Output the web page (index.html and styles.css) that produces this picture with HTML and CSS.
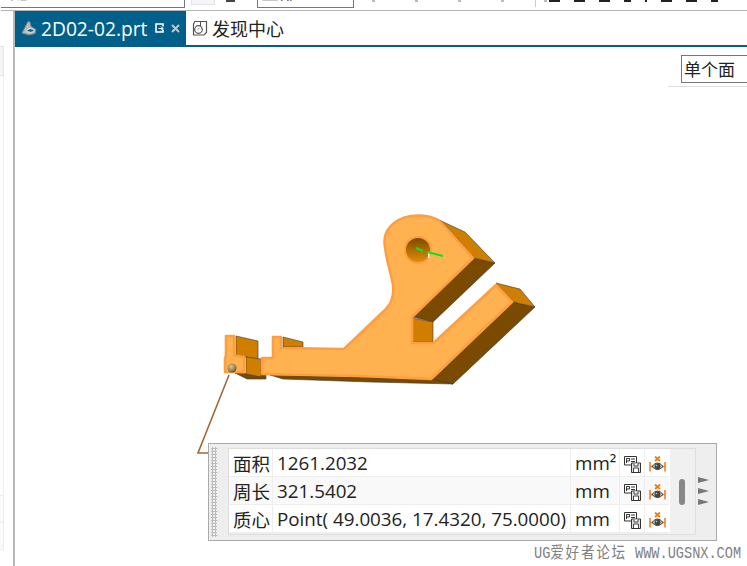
FILE: index.html
```html
<!DOCTYPE html>
<html lang="en">
<head>
  <meta charset="UTF-8" />
  <title>2D02-02.prt</title>
  <link rel="stylesheet" href="styles.css">
</head>
<body>

  <svg class="defs" width="0" height="0">
    <symbol id="ico-save" viewBox="0 0 17 17">
      <path d="M0.5 0.5h12v8.500h-12z" fill="#fff" stroke="#333"/>
      <path d="M2.500 7V2.500h3v2.500h-3M7 3h4M7 5.500h4" fill="none" stroke="#333"/>
      <path d="M7.500 7h9v9.500h-9z" fill="#e4e4e4" stroke="#333"/>
      <path d="M10 7.500v2.500h4V7.500" fill="#fff" stroke="#444"/>
      <path d="M9.500 16v-4h5v4" fill="#fff" stroke="#444"/>
    </symbol>
    <symbol id="ico-eye" viewBox="0 0 17 16">
      <path d="M6 0.500l5 4.500M11 0.500L6 5" stroke="#f07c10" stroke-width="1.800" fill="none"/>
      <path d="M1 6v9.500M16 6v9.500M1 10.500h3M13 10.500h3" stroke="#f07c10" stroke-width="1.500" fill="none"/>
      <path d="M3 10.500q5.500-7 11 0q-5.500 6-11 0z" fill="#d4d4d4" stroke="#333"/>
      <circle cx="8.500" cy="10.500" r="3" fill="#444"/>
      <circle cx="7.500" cy="9.500" r="0.800" fill="#ccc"/>
    </symbol>
  </svg>

  <div class="toolbar">
    <div class="tb-select tb-first"><span class="tb-clip">配</span></div>
    <div class="tb-btn"></div>
    <div class="tb-dash"></div>
    <div class="tb-select tb-second"><span class="tb-clip">全部</span></div>
    <div class="tb-dots"><i></i><i></i><i></i><i></i><i></i></div>
    <div class="tb-sep"></div>
    <div class="tb-icons"><i></i><i></i><i></i><i class="small"></i><i class="tiny"></i><i></i><i></i><i class="small"></i></div>
  </div>

  <div class="workspace">
    <div class="sidebar">
      <div class="side-row"></div>
      <div class="side-spacer"></div>
      <div class="side-row low"></div>
      <div class="side-row low"></div>
    </div>

    <div class="main">
      <div class="tabbar">
        <div class="tab active">
          <svg class="tab-ico" width="16" height="16" viewBox="0 0 16 16">
            <path d="M1 13L7 1.500l2 .5 1 4.500 5 3-1 4-6 1.500z" fill="#b9bcbe" stroke="#7c8084"/>
            <ellipse cx="9.500" cy="10.500" rx="3.500" ry="1.800" fill="#00618a" stroke="#eee"/>
          </svg>
          <span>2D02-02.prt</span>
          <svg class="tab-pop" width="9" height="10" viewBox="0 0 9 10">
            <path d="M8 3.500V1H1v8h7V6.500" fill="none" stroke="#fff" stroke-width="1.600"/>
            <path d="M3.500 5.500H8M6 3.500l2 2-2 2" fill="none" stroke="#fff"/>
          </svg>
          <svg class="tab-close" width="9" height="9" viewBox="0 0 9 9">
            <path d="M1 1l7 7M8 1L1 8" stroke="#b9c8d0" stroke-width="2"/>
          </svg>
        </div>
        <div class="tab plain">
          <svg class="tab-ico" width="16" height="16" viewBox="0 0 16 16">
            <path d="M3 1.500h11.500v11L12 15H1.500V4z" fill="none" stroke="#555" stroke-width="1.200"/>
            <path d="M8.500 1.500v5" stroke="#555" fill="none"/>
            <circle cx="6.500" cy="9.500" r="3.800" fill="none" stroke="#555" stroke-width="1.200"/>
            <path d="M5 11l1-2.500 2.200-1z" fill="#888"/>
          </svg>
          <span>发现中心</span>
        </div>
      </div>

      <div class="viewport">
        <svg class="model" viewBox="15 47 732 519" width="732" height="519">
          <defs>
            <linearGradient id="hole" x1="0" y1="0" x2="0" y2="1">
              <stop offset="0" stop-color="#7a4a00"/>
              <stop offset="0.5" stop-color="#b06c00"/>
              <stop offset="1" stop-color="#e08c10"/>
            </linearGradient>
            <radialGradient id="ball" cx="0.4" cy="0.35" r="0.7">
              <stop offset="0" stop-color="#d8c48e"/>
              <stop offset="0.6" stop-color="#9c8a5c"/>
              <stop offset="1" stop-color="#4e4630"/>
            </radialGradient>
          </defs>

          <!-- leader line -->
          <path d="M229 375L198 453H209" fill="none" stroke="#a0693a" stroke-width="1.600"/>

          <!-- side faces -->
          <g fill="#7a4a00" stroke="#3a3a3a" stroke-width="0.600">
            <path d="M474 258L495 263L433 322L413 317z"/>
            <path d="M513 302L535 307L453 384L432 380z"/>
            <path d="M270 375L432 379L453 384L370 382L283 379z"/>
            <path d="M235 373L266 375V379L247 379z"/>
          </g>
          <g fill="#d07e00" stroke="#3a3a3a" stroke-width="0.600">
            <path d="M437 219L465 232L495 263L474 258L447 227z"/>
            <path d="M496 283L520 289L535 307L513 302z"/>
            <path d="M412 318L433 322V342H412z"/>
            <path d="M236 336L258 341V359L246 357L236 355z"/>
            <path d="M246 357L261 359V377L246 374z"/>
            <path d="M283 337L303 342V347H283z"/>
          </g>

          <!-- lit faces -->
          <g fill="#ffb24f" stroke="#ff9e40" stroke-width="2.600" stroke-linejoin="round">
            <path d="M226 336H234V355.500L244 357V372L225 372V359L226 355z"/>
            <path d="M418 215.500C435 215.500 440 221 446 228L473 258L412 317V343H433.500L496 285L512 302L431 379L360 376L262 374V358L273 358V337H281V348L344 349L386 309C393 302 394 294 393 285C391 272 386 260 384.500 243C383.500 227 399 215.500 418 215.500z"/>
          </g>

          <!-- hole -->
          <circle cx="418" cy="250" r="14" fill="#ff9e40"/>
          <circle cx="418" cy="250" r="12" fill="url(#hole)"/>
          <path d="M428 252h1.500v6h-1.500z" fill="#fff"/>
          <path d="M416 248l7 3M427 252l16 4" stroke="#12e020" stroke-width="2" fill="none"/>

          <circle cx="232" cy="368" r="4.500" fill="url(#ball)"/>
        </svg>

        <div class="face-select">单个面</div>
        <div class="face-line"></div>

        <div class="measure">
          <div class="grip"></div>
          <div class="measure-table">
            <div class="rows">
              <div class="row">
                <div class="cell">面积</div>
                <div class="cell value">1261.2032</div>
                <div class="cell value">mm²</div>
                <div class="cell ico"><svg width="17" height="17"><use href="#ico-save"/></svg></div>
                <div class="cell ico"><svg width="17" height="16"><use href="#ico-eye"/></svg></div>
              </div>
              <div class="row alt">
                <div class="cell">周长</div>
                <div class="cell value">321.5402</div>
                <div class="cell value">mm</div>
                <div class="cell ico"><svg width="17" height="17"><use href="#ico-save"/></svg></div>
                <div class="cell ico"><svg width="17" height="16"><use href="#ico-eye"/></svg></div>
              </div>
              <div class="row">
                <div class="cell">质心</div>
                <div class="cell value">Point( 49.0036, 17.4320, 75.0000)</div>
                <div class="cell value">mm</div>
                <div class="cell ico"><svg width="17" height="17"><use href="#ico-save"/></svg></div>
                <div class="cell ico"><svg width="17" height="16"><use href="#ico-eye"/></svg></div>
              </div>
            </div>
            <div class="scroll"><div class="thumb"></div></div>
          </div>
          <div class="arrows"><i></i><i></i><i></i></div>
        </div>

        <div class="watermark">UG<span class="wm-cjk">爱好者论坛</span> WWW.UGSNX.COM</div>
      </div>
    </div>
  </div>

</body>
</html>
```

FILE: styles.css
```css
html, body {
  margin: 0;
  height: 100%;
  overflow: hidden;
  background: #fff;
}

body {
  width: 747px;
  height: 566px;
  font-family: "Open Sans", "Noto Sans CJK SC", sans-serif;
  color: #222;
}

.defs {
  display: block;
  height: 0;
}

/* top toolbar, cut off by the screenshot */
.toolbar {
  height: 10px;
  display: flex;
  align-items: flex-start;
  border-bottom: 1px solid #b4b4b4;
  overflow: hidden;
  margin-left: 1px;
}

.tb-select {
  height: 8px;
  box-sizing: border-box;
  border: 1px solid #777;
  border-top: none;
  overflow: hidden;
  position: relative;
}

.tb-first {
  width: 186px;
  margin-left: -2px;
}

.tb-first .tb-clip {
  margin-left: 10px;
}

.tb-second {
  width: 97px;
  margin-left: 22px;
}

.tb-clip {
  display: block;
  font-size: 18px;
  line-height: 18px;
  margin: -17px 0 0 3px;
}

.tb-btn {
  width: 22px;
  height: 4px;
  margin-left: 6px;
  background: #f5f5f8;
  border: 1px solid #e4e4e8;
  border-top: none;
}

.tb-dash {
  width: 9px;
  height: 2px;
  margin: 0 0 0 11px;
  background: #444;
}

.tb-dots {
  display: flex;
  gap: 40px;
  margin-left: 18px;
}

.tb-dots i {
  width: 3px;
  height: 2px;
  background: #bbb;
}

.tb-sep {
  width: 1px;
  height: 7px;
  margin-left: -12px;
  background: #ccc;
}

.tb-icons {
  display: flex;
  gap: 14px;
  margin-left: 13px;
}

.tb-icons i {
  width: 11px;
  height: 2px;
  background: #222;
}

.tb-icons i.small {
  width: 7px;
}

.tb-icons i.tiny {
  width: 2px;
}

.workspace {
  display: flex;
  height: 555px;
}

.sidebar {
  width: 14px;
  flex: none;
  padding-top: 35px;
  box-sizing: border-box;
}

.side-row {
  width: 3px;
  height: 28px;
  background: #f4f4f4;
  border: 1px solid #e6e6e6;
  border-left: none;
}

.side-row.low {
  height: 26px;
  background: #fafafa;
  border-color: #eee;
  border-top: none;
}

.side-spacer {
  height: 420px;
  width: 4px;
  border-right: 1px solid #eee;
  border-bottom: 1px solid #eee;
  box-sizing: border-box;
}

.main {
  flex: 1;
  min-width: 0;
  border-left: 2px solid #b8b8b8;
  margin-left: -1px;
  display: flex;
  flex-direction: column;
}

.tabbar {
  height: 34px;
  flex: none;
  display: flex;
  border-bottom: 2px solid #00608a;
}

.tab {
  display: flex;
  align-items: center;
  font-size: 19.2px;
  padding: 0 0 0 6px;
  white-space: nowrap;
}

.tab.active {
  width: 171px;
  box-sizing: border-box;
  background: #00608a;
  color: #fff;
}

.tab-ico {
  flex: none;
  margin-right: 4px;
}

.tab.plain {
  font-size: 18px;
}

.tab.plain .tab-ico {
  margin-right: 4px;
}

.tab-pop {
  margin-left: 8px;
}

.tab-close {
  margin-left: 7px;
}

.viewport {
  position: relative;
  flex: 1;
  overflow: hidden;
}

.model {
  position: absolute;
  left: 0;
  top: 0;
}

.face-select {
  position: absolute;
  left: 666px;
  top: 8px;
  width: 70px;
  height: 28px;
  box-sizing: border-box;
  border: 1px solid #777;
  border-right: none;
  padding-left: 2px;
  font-size: 17px;
  line-height: 28px;
}

.face-line {
  position: absolute;
  left: 653px;
  right: 0;
  top: 39px;
  height: 1px;
  background: #ddd;
}

.measure {
  position: absolute;
  left: 193px;
  top: 396px;
  width: 509px;
  height: 98px;
  box-sizing: border-box;
  border: 1px solid #aaa;
  background: #eee;
  display: flex;
  align-items: flex-start;
}

.grip {
  width: 6px;
  height: 90px;
  margin: 3px 11px 0 2px;
  flex: none;
  background-image: radial-gradient(circle, #bcbcbc 1.1px, transparent 1.2px);
  background-size: 3px 3px;
}

.measure-table {
  display: flex;
  margin-top: 4px;
  height: 87px;
  box-sizing: border-box;
  border: 1px solid #ddd;
  background: #fff;
  flex: none;
}

.rows {
  display: flex;
  flex-direction: column;
  gap: 1px;
  background: #eee;
}

.row {
  display: grid;
  grid-template-columns: 43px 297px 48px 24px 24px;
  column-gap: 1px;
  height: 27px;
  background: #eee;
}

.cell {
  background: #fff;
  font-size: 18.5px;
  line-height: 29px;
  padding-left: 4px;
  white-space: nowrap;
  overflow: hidden;
}

.row.alt .cell {
  background: #f9f9f9;
}

.cell.value {
  font-size: 18.8px;
}

.cell.ico {
  display: flex;
  align-items: center;
  justify-content: center;
  padding: 3px 0 0;
}

.scroll {
  width: 25px;
  margin-left: 1px;
  padding-right: 2px;
  box-sizing: border-box;
  background: #f0f0f0;
  display: flex;
  justify-content: center;
  align-items: center;
}

.thumb {
  width: 6px;
  height: 26px;
  border-radius: 3px;
  background: #888;
}

.arrows {
  display: flex;
  flex-direction: column;
  gap: 5px;
  margin: 33px 0 0 2px;
}

.arrows i {
  display: block;
  width: 0;
  height: 0;
  border-left: 11px solid #777;
  border-top: 3px solid transparent;
  border-bottom: 3px solid transparent;
}

.watermark {
  position: absolute;
  left: 519px;
  top: 498px;
  font-family: "Liberation Mono", "Noto Sans CJK SC", monospace;
  font-size: 16px;
  line-height: 18px;
  color: #808080;
  white-space: nowrap;
  transform: scaleX(0.85);
  transform-origin: left center;
}

.wm-cjk {
  letter-spacing: 2px;
}
```
